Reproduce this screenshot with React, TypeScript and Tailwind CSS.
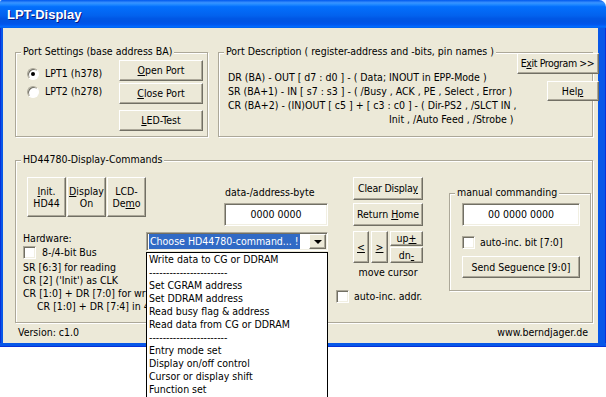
import React from "react";

const raised =
  "bg-[#ECE9D8] border border-t-white border-l-white border-r-[#716F64] border-b-[#716F64] shadow-[inset_-1px_-1px_0_#ACA899]";
const sunken =
  "bg-white border border-t-[#ACA899] border-l-[#ACA899] border-r-white border-b-white shadow-[inset_1px_1px_0_#716F64,inset_-1px_-1px_0_#F1EFE2]";
const etched = "border border-[#ACA899] shadow-[inset_1px_1px_0_#fff,1px_1px_0_#fff]";

function Btn({ className = "", children }: { className?: string; children?: React.ReactNode }) {
  return (
    <div className={`${raised} flex items-center justify-center text-center whitespace-nowrap ${className}`}>
      {children}
    </div>
  );
}

function Check() {
  return <div className={`${sunken} w-[13px] h-[13px] shrink-0`} />;
}

function Radio({ checked }: { checked?: boolean }) {
  return (
    <div className="w-[12px] h-[12px] shrink-0 rounded-full border border-t-[#ACA899] border-l-[#ACA899] border-r-white border-b-white bg-white shadow-[inset_1px_1px_0_#716F64] flex items-center justify-center">
      {checked && <div className="w-[4px] h-[4px] rounded-full bg-black" />}
    </div>
  );
}

function Group({
  legend,
  className = "",
  children,
}: {
  legend: string;
  className?: string;
  children?: React.ReactNode;
}) {
  return (
    <div className={`relative ${etched} ${className}`}>
      <span className="absolute -top-[8px] left-[5px] px-[2px] bg-[#ECE9D8] leading-[13px] whitespace-nowrap">
        {legend}
      </span>
      {children}
    </div>
  );
}

const menuItems = [
  "Write data to CG or DDRAM",
  "-----------------------",
  "Set CGRAM address",
  "Set DDRAM address",
  "Read busy flag & address",
  "Read data from CG or DDRAM",
  "-----------------------",
  "Entry mode set",
  "Display on/off control",
  "Cursor or display shift",
  "Function set",
];

export default function App() {
  return (
    <div className="w-[606px] h-[397px] overflow-hidden bg-white relative [font-family:'DejaVu_Sans_Condensed','Liberation_Sans',sans-serif] text-[10.5px] leading-[13px] text-black">
      <div className="w-[606px] h-[347px] flex flex-col">
        {/* Title bar */}
        <div className="h-[28px] shrink-0 rounded-tr-[7px] rounded-tl-[2px] bg-[linear-gradient(180deg,#0058EE_0%,#3A93FF_10%,#288EFF_14%,#127DFF_20%,#036FFC_24%,#0262EE_56%,#0057E5_66%,#0054E3_76%,#0055EB_86%,#005BF5_90%,#026AFE_94%,#0062EF_100%)] flex items-center pl-[7px]">
          <span className="text-white font-bold text-[13px] [font-family:'Liberation_Sans',sans-serif] [text-shadow:1px_1px_#0A1883]">
            LPT-Display
          </span>
        </div>
        <div className="flex flex-1 min-h-0">
          <div className="w-[3px] bg-[#0757E8] border-l border-l-[#0831D9]" />
          {/* Client */}
          <div className="flex-1 bg-[#ECE9D8] flex flex-col">
            {/* Top row */}
            <div className="flex mt-[24px] ml-[12px] gap-[10px]">
              <Group legend="Port Settings (base address BA)" className="w-[193px] h-[85px]">
                <div className="flex pl-[11px] pt-[7px]">
                  <div className="w-[92px] flex flex-col pt-[7px] gap-[5px]">
                    <div className="flex items-center gap-[6px] h-[13px]">
                      <Radio checked />
                      <span>LPT1 (h378)</span>
                    </div>
                    <div className="flex items-center gap-[6px] h-[13px]">
                      <Radio />
                      <span>LPT2 (h278)</span>
                    </div>
                  </div>
                  <div className="flex flex-col">
                    <Btn className="w-[84px] h-[21px]">
                      <span>
                        <u>O</u>pen Port
                      </span>
                    </Btn>
                    <Btn className="w-[84px] h-[21px] mt-[2px]">
                      <span>
                        <u>C</u>lose Port
                      </span>
                    </Btn>
                    <Btn className="w-[84px] h-[21px] mt-[6px]">
                      <span>
                        <u>L</u>ED-Test
                      </span>
                    </Btn>
                  </div>
                </div>
              </Group>
              <Group
                legend="Port Description ( register-address and -bits, pin names )"
                className="w-[375px] h-[85px]"
              >
                <div className="flex">
                  <div className="flex-1 pt-[17px] pl-[9px] leading-[14px] whitespace-nowrap">
                    <div>DR (BA) - OUT [ d7 : d0 ] - ( Data; INOUT in EPP-Mode )</div>
                    <div>SR (BA+1) - IN [ s7 : s3 ] - ( /Busy , ACK , PE , Select , Error )</div>
                    <div>CR (BA+2) - (IN)OUT [ c5 ] + [ c3 : c0 ] - ( Dir-PS2 , /SLCT IN ,</div>
                    <div className="pl-[161px]">Init , /Auto Feed , /Strobe )</div>
                  </div>
                  <div className="flex flex-col items-end pr-[6px]">
                    <Btn className="w-[82px] h-[21px] tracking-[-0.4px]">
                      <span>
                        E<u>x</u>it Program &gt;&gt;
                      </span>
                    </Btn>
                    <Btn className="w-[52px] h-[20px] mt-[7px]">
                      <span>
                        Hel<u>p</u>
                      </span>
                    </Btn>
                  </div>
                </div>
              </Group>
            </div>

            {/* HD44780 group */}
            <Group legend="HD44780-Display-Commands" className="mt-[23px] ml-[12px] w-[578px] h-[163px]">
              <div className="flex items-start">
                {/* col1 */}
                <div className="w-[130px] h-[160px] overflow-hidden pl-[7px] flex flex-col whitespace-nowrap">
                  <div className="flex gap-[1px] mt-[16px] ml-[4px]">
                    <Btn className="w-[43px] h-[40px] leading-[12px]">
                      <span>
                        <u>I</u>nit.
                        <br />
                        HD44
                      </span>
                    </Btn>
                    <Btn className="w-[43px] h-[40px] leading-[12px]">
                      <span>
                        <u>D</u>isplay
                        <br />
                        On
                      </span>
                    </Btn>
                    <Btn className="w-[43px] h-[40px] leading-[12px]">
                      <span>
                        LCD-
                        <br />
                        De<u>m</u>o
                      </span>
                    </Btn>
                  </div>
                  <div className="mt-[15px]">Hardware:</div>
                  <div className="mt-[1px] flex items-center gap-[6px] h-[13px]">
                    <Check />
                    <span>8-/4-bit Bus</span>
                  </div>
                  <div className="mt-[2px]">SR [6:3] for reading</div>
                  <div>CR [2] ('Init') as CLK</div>
                  <div>CR [1:0] + DR [7:0] for writing</div>
                  <div className="pl-[14px]">CR [1:0] + DR [7:4] in 4-bit mode</div>
                </div>
                {/* col2 */}
                <div className="w-[182px] relative flex flex-col">
                  <div className="mt-[25px] pl-[79px] whitespace-nowrap">data-/address-byte</div>
                  <div className={`${sunken} mt-[4px] ml-[78px] w-[104px] h-[23px] flex items-center justify-center`}>
                    0000 0000
                  </div>
                  <div className={`${sunken} mt-[6px] w-[182px] h-[19px] flex items-center pl-[2px] pr-[1px]`}>
                    <span className="bg-[#316AC5] text-white px-[1px] leading-[15px] whitespace-nowrap">
                      Choose HD44780-command... !
                    </span>
                    <div className="flex-1" />
                    <div className={`${raised} w-[17px] h-[15px] flex items-center justify-center`}>
                      <div className="w-0 h-0 border-l-[4px] border-r-[4px] border-t-[4px] border-l-transparent border-r-transparent border-t-black" />
                    </div>
                  </div>
                  <div className="absolute left-0 top-[91px] w-[182px] h-[150px] bg-white border border-black pl-[2px] z-10 whitespace-nowrap">
                    {menuItems.map((m, i) => (
                      <div key={i} className="h-[13px] leading-[13px]">
                        {m}
                      </div>
                    ))}
                  </div>
                </div>
                {/* col3 */}
                <div className="ml-[8px] w-[87px] flex flex-col">
                  <Btn className="mt-[16px] ml-[17px] w-[70px] h-[23px] tracking-[-0.2px]">
                    <span>
                      Clear Displa<u>y</u>
                    </span>
                  </Btn>
                  <Btn className="mt-[3px] ml-[17px] w-[70px] h-[23px]">
                    <span>
                      Return <u>H</u>ome
                    </span>
                  </Btn>
                  <div className="mt-[5px] ml-[17px] flex gap-[2px] h-[32px]">
                    <Btn className="w-[16px] h-[32px]">
                      <u>&lt;</u>
                    </Btn>
                    <Btn className="w-[17px] h-[32px]">
                      <u>&gt;</u>
                    </Btn>
                    <div className="flex flex-col gap-[1px]">
                      <Btn className="w-[33px] h-[15px]">
                        <span>
                          up<u>+</u>
                        </span>
                      </Btn>
                      <Btn className="w-[33px] h-[16px]">
                        <span>
                          dn<u>-</u>
                        </span>
                      </Btn>
                    </div>
                  </div>
                  <div className="mt-[3px] ml-[17px] w-[70px] text-center whitespace-nowrap">move cursor</div>
                  <div className="mt-[11px] flex items-center gap-[5px] h-[13px] whitespace-nowrap">
                    <Check />
                    <span>auto-inc. addr.</span>
                  </div>
                </div>
                {/* col4 */}
                <Group legend="manual commanding" className="ml-[26px] mt-[32px] w-[142px] h-[98px]">
                  <div className="flex flex-col pl-[12px]">
                    <div className={`${sunken} mt-[9px] w-[118px] h-[23px] flex items-center justify-center`}>
                      00 0000 0000
                    </div>
                    <div className="mt-[10px] flex items-center gap-[5px] h-[13px] whitespace-nowrap">
                      <Check />
                      <span>auto-inc. bit [7:0]</span>
                    </div>
                    <Btn className="mt-[7px] w-[118px] h-[22px]">Send Seguence [9:0]</Btn>
                  </div>
                </Group>
              </div>
            </Group>

            {/* Version row */}
            <div className="mt-[3px] flex justify-between pl-[15px] pr-[10px] whitespace-nowrap">
              <span>Version: c1.0</span>
              <span>www.berndjager.de</span>
            </div>
          </div>
          <div className="w-[8px] bg-[#0757E8] border-r border-r-[#0831D9]" />
        </div>
        <div className="h-[4px] shrink-0 bg-[#0757E8] border-b border-b-[#0831D9]" />
      </div>
    </div>
  );
}
